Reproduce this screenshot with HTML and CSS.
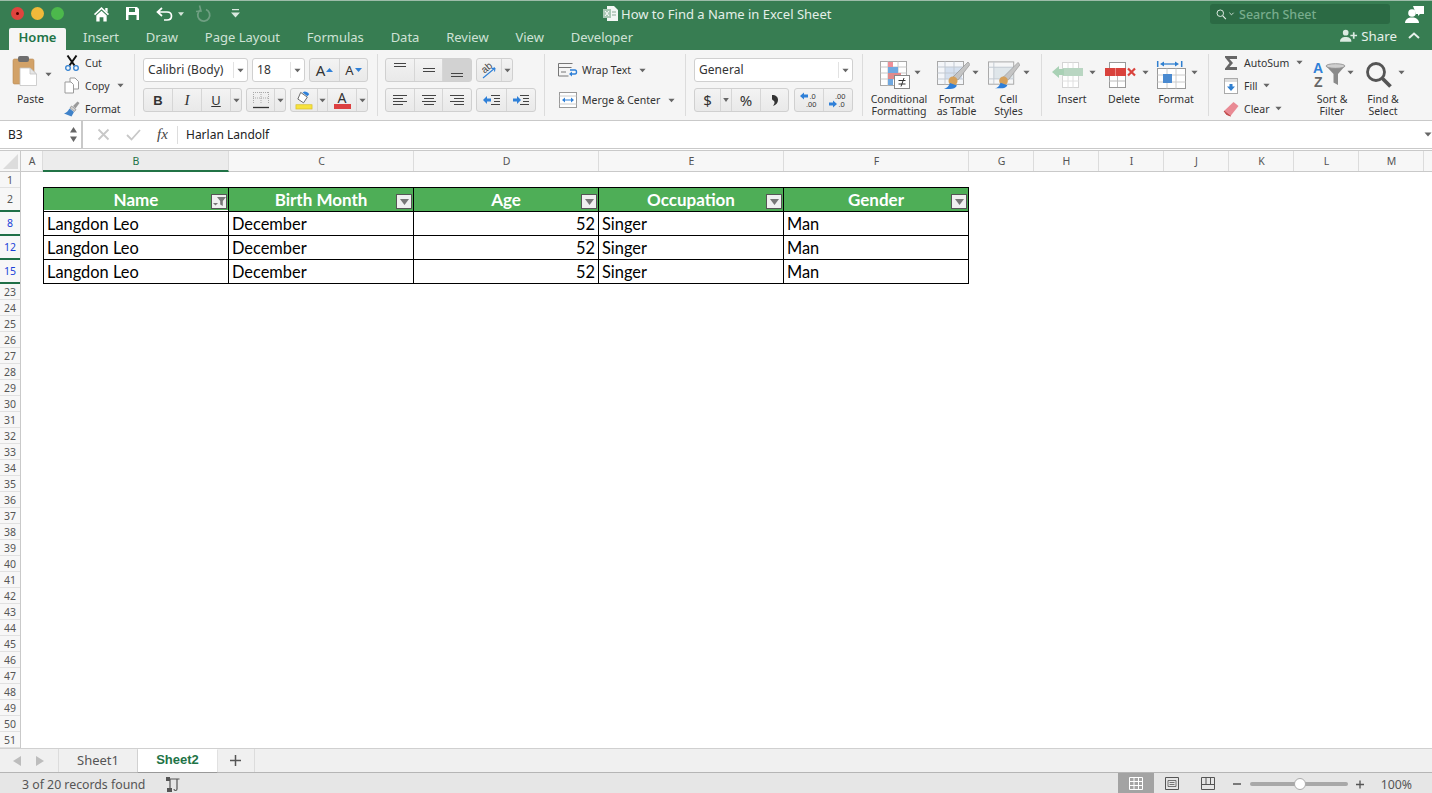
FILE: index.html
```html
<!DOCTYPE html>
<html lang="en">
<head>
<meta charset="utf-8">
<title>How to Find a Name in Excel Sheet</title>
<link rel="stylesheet" href="styles.css">
</head>
<body>
<svg class="defs" width="0" height="0" aria-hidden="true">
  <defs>
    <symbol id="caret" viewBox="0 0 8 5"><path d="M0.5 0.500h7L4 4.500z" fill="#666"/></symbol>
    <symbol id="brush" viewBox="0 0 33 28"><path d="M31 1l2 2.500L21 19l-5-3z" fill="#c4c4c4" stroke="#8a8a8a" stroke-width=".6"/><circle cx="16" cy="20" r="4.500" fill="#d5a05a"/><path d="M7 28c3-1 5-3 6-6l7 2.500c-1 2.500-4 3.500-7 3.500z" fill="#2f7fd8"/></symbol>
  </defs>
</svg>
<div class="app">
  <header class="titlebar">
    <div class="lights">
      <span class="light red"></span><span class="light yellow"></span><span class="light green"></span>
    </div>
    <div class="quick">
      <svg width="17" height="16" viewBox="0 0 18 17"><path d="M9 1L1 8.500l1.200 1.200L9 3.500l6.800 6.200L17 8.500z" fill="#fff"/><path d="M13 2h2.500v5L13 5z" fill="#fff"/><path d="M3.500 10L9 5l5.500 5v6.500H11v-4.500H7v4.500H3.500z" fill="#fff"/></svg>
      <svg class="q-save" width="15" height="15" viewBox="0 0 15 15"><path d="M1 1h11l2 2v11H1z" fill="#fff"/><rect x="4" y="2" width="6" height="4" fill="#377d52"/><rect x="3.500" y="9" width="8" height="5" fill="#377d52"/></svg>
      <svg class="q-undo" width="17" height="14" viewBox="0 0 17 14"><path d="M6 1L1.500 5 6 9M2 5h9c3 0 4.500 1.800 4.500 4s-1.500 4-4.500 4H8" fill="none" stroke="#fff" stroke-width="1.700"/></svg>
      <svg class="caret-w" width="6" height="4" viewBox="0 0 8 5"><path d="M0 0h8L4 5z" fill="#d5e5da"/></svg>
      <svg class="q-redo" width="15" height="17" viewBox="0 0 15 17"><path d="M10 4.500A6 6 0 1 1 4.500 5" fill="none" stroke="#6f9f82" stroke-width="1.800"/><path d="M3.500.5L5 6 0 6.500" fill="none" stroke="#6f9f82" stroke-width="1.600"/></svg>
      <svg class="q-more" width="9" height="9" viewBox="0 0 9 9"><path d="M1 0h7v1.300H1zM0 3.500h9L4.500 8.500z" fill="#d9e8de"/></svg>
    </div>
    <div class="doc-title">
      <svg width="15" height="15" viewBox="0 0 15 15"><path d="M4 0h7l4 4v11H4z" fill="#f4f7f5"/><rect x="0" y="3" width="8" height="9" fill="#a9c7b4"/><path d="M2 5l4 5M6 5l-4 5" stroke="#fff"/><path d="M9 6h4M9 9h4" stroke="#8aa896"/></svg>
      <span>How to Find a Name in Excel Sheet</span>
    </div>
    <div class="search">
      <svg width="12" height="13" viewBox="0 0 14 13"><circle cx="5" cy="5" r="3.800" fill="none" stroke="#e8f1eb" stroke-width="1.100"/><path d="M8 8l3.500 3.800" stroke="#e8f1eb" stroke-width="1.300"/></svg>
      <svg class="s-caret" width="5" height="4" viewBox="0 0 6 4"><path d="M0.500 0.500L3 3l2.500-2.500" fill="none" stroke="#e8f1eb"/></svg>
      <span>Search Sheet</span>
    </div>
    <svg class="person-c" width="19" height="19" viewBox="0 0 19 19"><path d="M8 1h11v8h-4l-2 2v-2h-2z" fill="#fff"/><circle cx="7" cy="8" r="3.800" fill="#fff"/><path d="M0 18c0-3.500 3-5.500 7-5.500s7 2 7 5.500z" fill="#fff"/></svg>
  </header>

  <nav class="tabs">
    <div class="tab active">Home</div>
    <div class="tab t-insert">Insert</div>
    <div class="tab t-next">Draw</div>
    <div class="tab t-next">Page Layout</div>
    <div class="tab t-next">Formulas</div>
    <div class="tab t-next">Data</div>
    <div class="tab t-next">Review</div>
    <div class="tab t-next">View</div>
    <div class="tab t-next">Developer</div>
    <div class="share">
      <svg width="18" height="13" viewBox="0 0 19 13"><circle cx="6" cy="3.500" r="3" fill="#dcebe2"/><path d="M0 13c0-3.500 2.500-5 6-5s6 1.500 6 5z" fill="#dcebe2"/><path d="M11 6.500h7M14.500 3v7" stroke="#dcebe2" stroke-width="1.800"/></svg>
      <span>Share</span>
      <svg class="chev" width="12" height="7" viewBox="0 0 12 7"><path d="M1 6l5-4.500L11 6" fill="none" stroke="#e6f0ea" stroke-width="2"/></svg>
    </div>
  </nav>

  <section class="ribbon">
    <div class="group g-clip">
      <div class="paste">
        <svg width="24" height="30" viewBox="0 0 24 30"><rect x="0" y="3" width="21" height="25" rx="1.500" fill="#d2a268" stroke="#b88a52" stroke-width=".6"/><rect x="5" y="0" width="11" height="6" rx="2" fill="#6e6e6e"/><path d="M7 12h10l6.500 6v11.500H7z" fill="#fff" stroke="#c4c4c4" stroke-width=".8"/><path d="M17 12v6h6.500z" fill="#e6e6e6" stroke="#c4c4c4" stroke-width=".8"/></svg>
        <svg class="caret" width="7" height="5"><use href="#caret"/></svg>
        <span class="lbl">Paste</span>
      </div>
      <div class="clip-list">
        <div class="clip-row">
          <svg width="16" height="16" viewBox="0 0 16 16"><path d="M3.500 0.500l7 10M12.500 0.500l-7 10" stroke="#111" stroke-width="2"/><circle cx="4" cy="13" r="2.300" fill="none" stroke="#2f7fd0" stroke-width="1.300"/><circle cx="12" cy="13" r="2.300" fill="none" stroke="#2f7fd0" stroke-width="1.300"/></svg>
          <span>Cut</span>
        </div>
        <div class="clip-row">
          <svg width="16" height="17" viewBox="0 0 16 17"><path d="M6 1h5l3.500 3.500V12H6z" fill="#fff" stroke="#9b9b9b"/><path d="M1 5h6l2.500 2.500V16H1z" fill="#fff" stroke="#9b9b9b"/></svg>
          <span>Copy</span>
          <svg class="caret" width="7" height="5"><use href="#caret"/></svg>
        </div>
        <div class="clip-row">
          <svg width="16" height="16" viewBox="0 0 16 16"><path d="M9 5l4.500-4.500L15.500 2 11.500 7.500z" fill="#9a9a9a"/><path d="M7.500 5l4.500 3.500-1.500 2L6 7z" fill="#d0d0d0" stroke="#777" stroke-width=".6"/><path d="M5.500 7.500l4.500 3.500-2.500 4.500L0 12.500c2.500-.5 4-2.500 5.500-5z" fill="#3f82c9"/></svg>
          <span>Format</span>
        </div>
      </div>
    </div>

    <div class="group g-font">
      <div class="ctl-row">
        <div class="combo c-font"><span>Calibri (Body)</span><i class="combo-arrow"><svg width="7" height="5"><use href="#caret"/></svg></i></div>
        <div class="combo c-size"><span>18</span><i class="combo-arrow"><svg width="7" height="5"><use href="#caret"/></svg></i></div>
        <div class="btns">
          <div class="btn w29 big-a">A<svg width="7" height="4" viewBox="0 0 7 4"><path d="M0 4l3.500-4L7 4z" fill="#2f80d8"/></svg></div>
          <div class="btn w28 small-a">A<svg width="7" height="4" viewBox="0 0 7 4"><path d="M0 0l3.500 4L7 0z" fill="#2f80d8"/></svg></div>
        </div>
      </div>
      <div class="ctl-row">
        <div class="btns">
          <div class="btn w28 b">B</div>
          <div class="btn w29 i">I</div>
          <div class="btn w29 u">U</div>
          <div class="btn w11"><svg width="7" height="5"><use href="#caret"/></svg></div>
        </div>
        <div class="btns">
          <div class="btn w27"><svg width="18" height="18" viewBox="0 0 18 18"><path d="M1.500 1v12M9 1v12M16.500 1v12M1 1.500h16M1 7h16" stroke="#aaa" stroke-dasharray="1 1"/><path d="M1 16.500h16" stroke="#333" stroke-width="1.300"/></svg></div>
          <div class="btn w11"><svg width="7" height="5"><use href="#caret"/></svg></div>
        </div>
        <div class="btns">
          <div class="btn w26"><svg width="18" height="20" viewBox="0 0 19 20"><path d="M6 2l7 5-4 6-6-4z" fill="#fff" stroke="#666"/><path d="M8 2l5 4 2-2c-1-2-3-3-5-3z" fill="#2f80d8"/><rect x="1" y="15" width="17" height="4.500" fill="#f7e23e" stroke="#d5bd28" stroke-width=".7"/></svg></div>
          <div class="btn w10"><svg width="7" height="5"><use href="#caret"/></svg></div>
          <div class="btn w29 color-a"><span>A</span><i></i></div>
          <div class="btn w11"><svg width="7" height="5"><use href="#caret"/></svg></div>
        </div>
      </div>
    </div>

    <div class="group g-align">
      <div class="ctl-row">
        <div class="btns">
          <div class="btn w28"><svg class="al-top" width="14" height="12" viewBox="0 0 14 12"><path d="M1 1.500h12M1 4.500h12" stroke="#444"/></svg></div>
          <div class="btn w28"><svg width="14" height="12" viewBox="0 0 14 12"><path d="M1 4.500h12M1 7.500h12" stroke="#444"/></svg></div>
          <div class="btn w29 pressed"><svg class="al-bot" width="14" height="12" viewBox="0 0 14 12"><path d="M1 7.500h12M1 10.500h12" stroke="#444"/></svg></div>
        </div>
        <div class="btns">
          <div class="btn w24"><svg width="18" height="17" viewBox="0 0 18 17"><text x="2" y="9" class="ab" transform="rotate(-40 7 7)">ab</text><path d="M3 16L15 6M15 6l-3.500.5M15 6l-.5 3.500" fill="none" stroke="#2f80d8" stroke-width="1.100"/></svg></div>
          <div class="btn w11"><svg width="7" height="5"><use href="#caret"/></svg></div>
        </div>
      </div>
      <div class="ctl-row">
        <div class="btns">
          <div class="btn w28"><svg width="16" height="12" viewBox="0 0 16 12"><path d="M1 1.500h14M1 4.500h10M1 7.500h14M1 10.500h10" stroke="#444"/></svg></div>
          <div class="btn w28"><svg width="16" height="12" viewBox="0 0 16 12"><path d="M1 1.500h14M3 4.500h10M1 7.500h14M3 10.500h10" stroke="#444"/></svg></div>
          <div class="btn w29"><svg width="16" height="12" viewBox="0 0 16 12"><path d="M1 1.500h14M5 4.500h10M1 7.500h14M5 10.500h10" stroke="#444"/></svg></div>
        </div>
        <div class="btns">
          <div class="btn w29"><svg width="18" height="12" viewBox="0 0 18 12"><path d="M8 1.500h9M11 4.500h6M11 7.500h6M8 10.500h9" stroke="#444"/><path d="M0 6l4-4v2.500h4v3H4V10z" fill="#2f80d8"/></svg></div>
          <div class="btn w29"><svg width="18" height="12" viewBox="0 0 18 12"><path d="M8 1.500h9M11 4.500h6M11 7.500h6M8 10.500h9" stroke="#444"/><path d="M9 6L5 2v2.500H1v3h4V10z" fill="#2f80d8"/></svg></div>
        </div>
      </div>
    </div>

    <div class="group g-wrap">
      <div class="wrap-row">
        <svg width="20" height="14" viewBox="0 0 20 14"><path d="M.5.500h14M.5.500v12.500h10M.5 4.500h13M3 9h5" fill="none" stroke="#777"/><path d="M12 7h5c2 0 2 4 0 4h-3" fill="none" stroke="#2f80d8" stroke-width="1.400"/><path d="M11 11l3-2.500v5z" fill="#2f80d8"/></svg>
        <span>Wrap Text</span>
        <svg class="caret" width="7" height="5"><use href="#caret"/></svg>
      </div>
      <div class="wrap-row">
        <svg class="merge-ic" width="18" height="16" viewBox="0 0 18 16"><rect x=".5" y=".5" width="17" height="15" fill="#fff" stroke="#999"/><path d="M.5 4h17M.5 12h17" stroke="#ccc"/><path d="M4 8h10" stroke="#2f80d8"/><path d="M3 8l3-2.500v5zM15 8l-3-2.500v5z" fill="#2f80d8"/></svg>
        <span>Merge &amp; Center</span>
        <svg class="caret" width="7" height="5"><use href="#caret"/></svg>
      </div>
    </div>

    <div class="group g-number">
      <div class="combo c-general"><span>General</span><i class="combo-arrow"><svg width="7" height="5"><use href="#caret"/></svg></i></div>
      <div class="ctl-row">
        <div class="btns">
          <div class="btn w25 sym">$</div>
          <div class="btn w11"><svg width="6" height="4" viewBox="0 0 7 5"><path d="M0 0h7L3.500 5z" fill="#666"/></svg></div>
          <div class="btn w29 sym">%</div>
          <div class="btn w28 sym"><svg width="8" height="13" viewBox="0 0 8 13"><path d="M1 1c4 0 6 2 6 5 0 3-2 5-5 6 1.500-2 2-4 1-5C2 6 1 6 1 5z" fill="#333"/></svg></div>
        </div>
        <div class="btns">
          <div class="btn w28"><svg width="18" height="16" viewBox="0 0 18 16"><path d="M0 4l4-3.500V2.500h4v3H4v2z" fill="#2f80d8"/><text x="9.500" y="6.500" class="dectxt">.0</text><text x="6" y="15.300" class="dectxt">.00</text></svg></div>
          <div class="btn w29"><svg width="18" height="16" viewBox="0 0 18 16"><text x="6" y="6.500" class="dectxt">.00</text><text x="9.500" y="15.300" class="dectxt">.0</text><path d="M8 12L4 8.500v2H0v3h4v2z" fill="#2f80d8"/></svg></div>
        </div>
      </div>
    </div>

    <div class="group g-styles">
      <div class="big s-cond">
        <div class="big-ic"><svg width="30" height="28" viewBox="0 0 30 28"><rect x=".5" y=".5" width="26" height="24" fill="#fff" stroke="#a8a8a8"/><path d="M8 .5v24M18 .5v24M.5 6h26M.5 12h26M.5 18h26" stroke="#c8c8c8"/><rect x="8" y="1" width="5" height="5" fill="#ef8f98"/><rect x="8" y="6" width="10" height="6" fill="#6fa8e0"/><rect x="8" y="12" width="13" height="6" fill="#e08a8c"/><rect x="8" y="18" width="5" height="6" fill="#6fa8e0"/><rect x="14.500" y="14.500" width="15" height="13" fill="#fff" stroke="#888"/><path d="M18.500 19.500h7M18.500 23h7M24 17l-3 8.500" stroke="#333"/></svg><svg class="caret" width="7" height="5"><use href="#caret"/></svg></div>
        <span class="lbl">Conditional<br>Formatting</span>
      </div>
      <div class="big s-table">
        <div class="big-ic"><svg width="33" height="28" viewBox="0 0 33 28"><rect x=".5" y=".5" width="26" height="23" fill="#f4f6f9" stroke="#a8a8a8"/><rect x="8" y="6" width="17" height="12" fill="#d5e0ef"/><path d="M8 .5v23M17 .5v23M.5 6h26M.5 12h26M.5 18h26" stroke="#c2c9d2"/><use href="#brush" width="33" height="28"/></svg><svg class="caret" width="7" height="5"><use href="#caret"/></svg></div>
        <span class="lbl">Format<br>as Table</span>
      </div>
      <div class="big s-cell">
        <div class="big-ic"><svg width="32" height="28" viewBox="0 0 33 28"><rect x=".5" y=".5" width="26" height="23" fill="#f5f6f7" stroke="#a8a8a8"/><rect x="6" y="6" width="20" height="12" fill="#dfe6ea"/><path d="M.5 6h26M.5 18h26M6 .5v23" stroke="#c2c9d2"/><use href="#brush" width="33" height="28"/></svg><svg class="caret" width="7" height="5"><use href="#caret"/></svg></div>
        <span class="lbl">Cell<br>Styles</span>
      </div>
    </div>

    <div class="group g-cells">
      <div class="big c-insert">
        <div class="big-ic"><svg width="31" height="26" viewBox="0 0 31 26"><rect x="10.500" y=".5" width="16" height="25" fill="#fff" stroke="#d4d4d4"/><path d="M16 .5v25M21 .5v25M10 19h17" stroke="#e0e0e0"/><rect x="11" y="6" width="20" height="8" fill="#b9d6c2"/><path d="M0 10l7-6v3h5v6H7v3z" fill="#a9d1b5"/></svg><svg class="caret" width="7" height="5"><use href="#caret"/></svg></div>
        <span class="lbl">Insert</span>
      </div>
      <div class="big c-delete">
        <div class="big-ic"><svg width="31" height="26" viewBox="0 0 31 26"><rect x="4.500" y=".5" width="16" height="25" fill="#fff" stroke="#999"/><path d="M4 19h16M12.500 14v11" stroke="#bbb"/><rect x="0" y="6" width="21" height="8" fill="#d9423c"/><path d="M10.500 6v8" stroke="#eb8a85"/><path d="M23 6.500l7 7M30 6.500l-7 7" stroke="#d9423c" stroke-width="2.200"/></svg><svg class="caret" width="7" height="5"><use href="#caret"/></svg></div>
        <span class="lbl">Delete</span>
      </div>
      <div class="big c-format">
        <div class="big-ic"><svg width="29" height="28" viewBox="0 0 29 28"><path d="M.7 0v6M24.700 0v6" stroke="#2f7fd0" stroke-width="1.500"/><path d="M5 3h15" stroke="#2f7fd0" stroke-width="1.300"/><path d="M3 3l4-2.500v5zM22 3l-4-2.500v5z" fill="#2f7fd0"/><rect x=".5" y="7.500" width="28" height="20" fill="#fff" stroke="#999"/><path d="M10 7.500v20M19 7.500v20M.5 14h28M.5 21h28" stroke="#ccc"/><rect x="6" y="13" width="9" height="9" fill="#4a8ad0"/></svg><svg class="caret" width="7" height="5"><use href="#caret"/></svg></div>
        <span class="lbl">Format</span>
      </div>
    </div>

    <div class="group g-edit">
      <div class="edit-list">
        <div class="clip-row">
          <svg width="14" height="16" viewBox="0 0 14 16"><path d="M1 1h12v3H5.500L9 8l-3.500 4H13v3H1v-1.500L5.500 8 1 2.500z" fill="#666"/></svg>
          <span>AutoSum</span>
          <svg class="caret" width="7" height="5"><use href="#caret"/></svg>
        </div>
        <div class="clip-row tight">
          <svg width="14" height="16" viewBox="0 0 14 16"><rect x=".5" y=".5" width="13" height="15" fill="#fff" stroke="#aaa"/><rect x="1" y="1" width="12" height="3" fill="#ddd"/><path d="M7 13L3 8.500h2.500V6h3v2.500H11z" fill="#2f7fd0"/></svg>
          <span>Fill</span>
          <svg class="caret" width="7" height="5"><use href="#caret"/></svg>
        </div>
        <div class="clip-row tight">
          <svg class="ic-clear" width="16" height="16" viewBox="0 0 16 16"><path d="M10.500 1l5 4-8 10-4-1.500L1 10z" fill="#e98a94"/><path d="M1 10l5 4 1.500 1-4-1.500z" fill="#c55" stroke="#b44" stroke-width=".8"/></svg>
          <span>Clear</span>
          <svg class="caret" width="7" height="5"><use href="#caret"/></svg>
        </div>
      </div>
      <div class="big e-sort">
        <div class="big-ic"><svg width="32" height="27" viewBox="0 0 32 27"><text x="0" y="12" class="az a1">A</text><text x="1" y="26" class="az z1">Z</text><path d="M13 5h19l-7 8v11l-4.500-2.500V13z" fill="#8b8b8b"/><ellipse cx="22.500" cy="5" rx="9.500" ry="2.300" fill="#cfcfcf" stroke="#8b8b8b" stroke-width=".8"/></svg><svg class="caret" width="7" height="5"><use href="#caret"/></svg></div>
        <span class="lbl">Sort &amp;<br>Filter</span>
      </div>
      <div class="big e-find">
        <div class="big-ic"><svg width="26" height="26" viewBox="0 0 26 26"><circle cx="10" cy="10" r="8.500" fill="none" stroke="#555" stroke-width="2.800"/><path d="M16.500 16.500l8 8" stroke="#555" stroke-width="3.800"/></svg><svg class="caret" width="7" height="5"><use href="#caret"/></svg></div>
        <span class="lbl">Find &amp;<br>Select</span>
      </div>
    </div>
  </section>

  <section class="formula">
    <div class="namebox">
      <span>B3</span>
      <svg width="7" height="15" viewBox="0 0 7 15"><path d="M0 5.500L3.500 0 7 5.500zM0 9.500L3.500 15 7 9.500z" fill="#666"/></svg>
    </div>
    <div class="f-actions">
      <svg width="13" height="13" viewBox="0 0 13 13"><path d="M1.500 1.500l10 10M11.500 1.500l-10 10" stroke="#c8c8c8" stroke-width="1.800"/></svg>
      <svg width="15" height="13" viewBox="0 0 15 13"><path d="M1 7l4.500 4.500L14 2" fill="none" stroke="#c8c8c8" stroke-width="1.800"/></svg>
      <span class="fx">fx</span>
    </div>
    <div class="f-input">Harlan Landolf</div>
    <svg class="f-expand" width="8" height="5"><use href="#caret"/></svg>
  </section>

  <div class="colheads">
    <div class="corner"><svg width="15" height="15" viewBox="0 0 16 16"><path d="M16 0v16H0z" fill="#dcdcdc"/></svg></div>
    <div class="ch w-a">A</div>
    <div class="ch w-b sel">B</div>
    <div class="ch w-b">C</div>
    <div class="ch w-b">D</div>
    <div class="ch w-b">E</div>
    <div class="ch w-b">F</div>
    <div class="ch w-g">G</div>
    <div class="ch w-g">H</div>
    <div class="ch w-g">I</div>
    <div class="ch w-g">J</div>
    <div class="ch w-g">K</div>
    <div class="ch w-g">L</div>
    <div class="ch w-g">M</div>
    <div class="ch w-last"></div>
  </div>

  <main class="sheet">
    <div class="rowheads">
      <div class="rh">1</div>
      <div class="rh tall">2</div>
      <div class="rh tall fl">8</div>
      <div class="rh tall fl">12</div>
      <div class="rh tall fl">15</div>
      <div class="rh">23</div><div class="rh">24</div><div class="rh">25</div><div class="rh">26</div><div class="rh">27</div>
      <div class="rh">28</div><div class="rh">29</div><div class="rh">30</div><div class="rh">31</div><div class="rh">32</div>
      <div class="rh">33</div><div class="rh">34</div><div class="rh">35</div><div class="rh">36</div><div class="rh">37</div>
      <div class="rh">38</div><div class="rh">39</div><div class="rh">40</div><div class="rh">41</div><div class="rh">42</div>
      <div class="rh">43</div><div class="rh">44</div><div class="rh">45</div><div class="rh">46</div><div class="rh">47</div>
      <div class="rh">48</div><div class="rh">49</div><div class="rh">50</div><div class="rh">51</div>
    </div>
    <div class="cells">
      <table class="data">
        <thead>
          <tr>
            <th class="selhead">Name<span class="fbtn"><svg width="13" height="9" viewBox="0 0 13 9"><path d="M0 6h5L2.500 8.500z" fill="#777"/><path d="M4 0h9L9.800 4v5l-2.600-1.500V4z" fill="#777"/></svg></span></th>
            <th>Birth Month<span class="fbtn"><svg width="9" height="6" viewBox="0 0 9 6"><path d="M0 0h9L4.500 6z" fill="#777"/></svg></span></th>
            <th>Age<span class="fbtn"><svg width="9" height="6" viewBox="0 0 9 6"><path d="M0 0h9L4.500 6z" fill="#777"/></svg></span></th>
            <th>Occupation<span class="fbtn"><svg width="9" height="6" viewBox="0 0 9 6"><path d="M0 0h9L4.500 6z" fill="#777"/></svg></span></th>
            <th>Gender<span class="fbtn"><svg width="9" height="6" viewBox="0 0 9 6"><path d="M0 0h9L4.500 6z" fill="#777"/></svg></span></th>
          </tr>
        </thead>
        <tbody>
          <tr><td>Langdon Leo</td><td>December</td><td class="num">52</td><td>Singer</td><td>Man</td></tr>
          <tr><td>Langdon Leo</td><td>December</td><td class="num">52</td><td>Singer</td><td>Man</td></tr>
          <tr><td>Langdon Leo</td><td>December</td><td class="num">52</td><td>Singer</td><td>Man</td></tr>
        </tbody>
      </table>
    </div>
  </main>

  <div class="sheettabs">
    <div class="nav-arrows">
      <svg width="8" height="10" viewBox="0 0 8 10"><path d="M8 0v10L0 5z" fill="#bdbdbd"/></svg>
      <svg width="8" height="10" viewBox="0 0 8 10"><path d="M0 0v10l8-5z" fill="#bdbdbd"/></svg>
    </div>
    <div class="stab">Sheet1</div>
    <div class="stab on">Sheet2</div>
    <div class="stab add"><svg width="11" height="11" viewBox="0 0 11 11"><path d="M0 5.500h11M5.500 0v11" stroke="#555" stroke-width="1.500"/></svg></div>
  </div>

  <footer class="status">
    <span class="st-text">3 of 20 records found</span>
    <svg class="st-macro" width="15" height="15" viewBox="0 0 15 15"><path d="M2.500 2h11M4 2v9M11 2v10c0 2-3 2-3 0" fill="none" stroke="#555" stroke-width="1.200"/><rect x="0" y="0" width="4" height="4" fill="#555"/><rect x="1" y="11" width="5" height="4" fill="#555"/></svg>
    <div class="views">
      <div class="vw on"><svg width="14" height="13" viewBox="0 0 14 13"><path d="M.5.500h13v12H.5zM.5 4.500h13M.5 8.500h13M5 .500v12M9.500.500v12" fill="none" stroke="#fff"/></svg></div>
      <div class="vw"><svg width="14" height="13" viewBox="0 0 14 13"><path d="M.5.500h13v12H.5z" fill="none" stroke="#555"/><path d="M3 3.500h8v6H3zM4.500 5.500h5M4.500 7.500h5" fill="none" stroke="#555" stroke-width=".8"/></svg></div>
      <div class="vw"><svg width="14" height="13" viewBox="0 0 14 13"><path d="M.5.500h13v12H.5zM.5 7.500h13M5 .500v7M9.500.500v7" fill="none" stroke="#555"/></svg></div>
    </div>
    <div class="zoom">
      <svg width="8" height="2" viewBox="0 0 8 2"><path d="M0 1h8" stroke="#555" stroke-width="1.500"/></svg>
      <div class="slider"><i></i></div>
      <svg width="8" height="9" viewBox="0 0 9 9"><path d="M0 4.500h9M4.500 0v9" stroke="#555" stroke-width="1.500"/></svg>
      <span>100%</span>
    </div>
  </footer>
</div>
</body>
</html>
```

FILE: styles.css
```css
* { box-sizing: border-box; }
html, body { margin: 0; padding: 0; height: 100%; overflow: hidden; background: #fff; }
body { font-family: "Noto Sans", "Open Sans", sans-serif; color: #333; }
svg { display: block; flex: none; overflow: visible; }
.defs { position: absolute; }
.app { width: 1432px; height: 793px; display: flex; flex-direction: column; }

/* title bar */
.titlebar { height: 28px; flex: none; background: #377d52; border-top: 1px solid #9dbca9; padding-bottom: 2px; display: flex; align-items: center; position: relative; color: #e8f1eb; }
.lights { display: flex; gap: 7px; margin-left: 11px; }
.light { width: 13px; height: 13px; border-radius: 50%; }
.light.red { background: #e0443e; position: relative; }
.light.red::after { content: ""; position: absolute; left: 5px; top: 5px; width: 3px; height: 3px; border-radius: 50%; background: #4d0000; }
.light.yellow { background: #f0b93a; }
.light.green { background: #4cb84c; }
.quick { display: flex; align-items: center; margin-left: 29px; }
.q-save { margin-left: 15px; }
.q-undo { margin-left: 16px; }
.caret-w { margin-left: 5px; }
.q-redo { margin-left: 12px; }
.q-more { margin-left: 20px; }
.doc-title { display: flex; align-items: center; gap: 3px; margin-left: 363px; font-size: 13px; white-space: nowrap; color: #e4efe8; }
.search { position: absolute; left: 1210px; top: 3px; width: 180px; height: 20px; background: #2b6a44; border-radius: 3px; display: flex; align-items: center; padding-left: 6px; font-size: 12.500px; font-weight: 500; color: #78ad8d; }
.s-caret { margin: 0 5px 0 1px; }
.person-c { position: absolute; left: 1405px; top: 4px; }

/* tabs */
.tabs { height: 22px; flex: none; background: #377d52; display: flex; position: relative; color: #cfe2d6; font-size: 13px; }
.tab { line-height: 19px; white-space: nowrap; }
.tab.active { width: 57px; margin-left: 9px; background: #f5f5f5; color: #217346; font-weight: 600; text-align: center; border-radius: 2px 2px 0 0; }
.t-insert { margin-left: 17px; }
.t-next { margin-left: 26.800px; }
.share { margin-left: auto; margin-right: 12px; display: flex; align-items: center; height: 15px; font-size: 13.300px; color: #e6f0ea; gap: 3px; }
.chev { margin-left: 8px; }

/* ribbon */
.ribbon { height: 71px; flex: none; background: #f5f5f5; border-bottom: 1px solid #c9c9c9; display: flex; font-size: 10.500px; color: #333; }
.group { height: 62px; margin-top: 4px; border-right: 1px solid #dcdcdc; flex: none; }
.lbl { display: block; line-height: 12px; text-align: center; white-space: nowrap; }
.caret { flex: none; }
.g-clip { width: 135px; display: flex; }
.paste { width: 60px; position: relative; padding: 2px 0 0 13px; }
.paste .caret { position: absolute; left: 45px; top: 18px; }
.paste .lbl { position: absolute; left: 17px; top: 39px; }
.clip-list { padding-left: 4px; display: flex; flex-direction: column; margin-top: -3px; }
.clip-row { height: 23px; flex: none; display: flex; align-items: center; gap: 5px; white-space: nowrap; }
.clip-row .caret { margin-left: 2px; }

.g-font { width: 243px; padding-left: 8px; }
.g-align { width: 167px; padding-left: 7px; }
.ctl-row { display: flex; gap: 4px; margin-top: 4px; height: 24px; }
.ctl-row + .ctl-row { margin-top: 6px; }
.combo { height: 24px; background: #fff; border: 1px solid #d0d0d0; border-radius: 3px; display: flex; align-items: center; padding: 0 0 2px 4px; font-size: 12px; letter-spacing: .05px; color: #333; position: relative; flex: none; }
.combo-arrow { position: absolute; right: 0; top: 3px; bottom: 3px; width: 14px; border-left: 1px solid #e2e2e2; display: flex; align-items: center; justify-content: center; }
.c-font { width: 105px; }
.c-size { width: 53px; }
.btns { display: flex; height: 24px; border: 1px solid #d0d0d0; border-radius: 3px; background: linear-gradient(#f3f3f3, #e9e9e9); flex: none; }
.btn { display: flex; align-items: center; justify-content: center; border-left: 1px solid #d6d6d6; height: 100%; font-size: 13px; color: #333; flex: none; }
.btn:first-child { border-left: 0; }
.w10 { width: 10px; }
.w11 { width: 11px; }
.w24 { width: 24px; }
.w25 { width: 25px; }
.w26 { width: 26px; }
.w27 { width: 27px; }
.w28 { width: 28px; }
.w29 { width: 29px; }
.pressed { background: #d2d2d2; }
.al-top { margin-top: -5px; }
.al-bot { margin-bottom: -4px; }
.big-a { font-size: 15px; gap: 1px; }
.small-a { font-size: 13px; gap: 1px; }
.b { font-weight: 700; font-family: "Liberation Sans", sans-serif; }
.i { font-style: italic; font-family: "Liberation Serif", serif; font-size: 15px; }
.u { text-decoration: underline; }
.color-a { flex-direction: column; line-height: 13px; font-size: 14px; }
.color-a i { width: 17px; height: 5px; background: #dc4040; display: block; }
.ab { font: 10px "Liberation Sans", sans-serif; fill: #444; }

.g-wrap { width: 141px; padding: 4px 0 0 13px; }
.wrap-row { height: 24px; display: flex; align-items: center; gap: 4px; white-space: nowrap; margin-bottom: 6px; }
.wrap-row .caret { margin-left: 4px; }
.merge-ic { margin: 0 1px; }
.g-number { width: 177px; padding-left: 8px; }
.c-general { width: 159px; margin-top: 4px; }
.g-number .ctl-row { margin-top: 6px; gap: 5px; }
.sym { font-size: 15px; }
.dectxt { font: 7.500px "Liberation Sans", sans-serif; fill: #333; }

.g-styles { width: 179px; display: flex; padding-left: 7px; }
.big { display: flex; flex-direction: column; align-items: flex-start; flex: none; }
.big .lbl { margin-top: 3px; align-self: center; }
.big-ic { display: flex; align-items: center; height: 36px; flex: none; padding-top: 5px; }
.big-ic .caret { margin-top: -4px; }
.s-cond { width: 58px; }
.s-cond .big-ic { margin-left: 10px; gap: 4px; }
.s-table { width: 57px; }
.s-table .big-ic { margin-left: 9px; gap: 2px; }
.s-cell { width: 47px; }
.s-cell .big-ic { margin-left: 3px; gap: 3px; }

.g-cells { width: 167px; display: flex; }
.c-insert { width: 60px; }
.c-insert .big-ic { margin-left: 10px; gap: 6px; }
.c-delete { width: 44px; }
.c-delete .big-ic { margin-left: 3px; gap: 6px; }
.c-format { width: 60px; }
.c-format .big-ic { margin-left: 11px; gap: 5px; }

.g-edit { flex: 1; border-right: 0; display: flex; padding-left: 15px; }
.edit-list { width: 86px; flex: none; display: flex; flex-direction: column; margin-top: -3px; }
.edit-list .clip-row { gap: 6px; }
.edit-list .clip-row .caret { margin-left: 1px; }
.edit-list .clip-row.tight .caret { margin-left: -1px; }
.ic-clear { margin: 0 -1px; }
.e-sort { width: 44px; }
.e-sort .big-ic { margin-left: 3px; gap: 2px; }
.e-find { width: 58px; }
.e-find .big-ic { margin-left: 12px; gap: 6px; }
.az { font: bold 14px "Liberation Sans", sans-serif; }
.a1 { fill: #2f80d8; }
.z1 { fill: #666; }

/* formula */
.formula { height: 28px; flex: none; background: #fff; border-bottom: 1px solid #c9c9c9; display: flex; align-items: center; position: relative; font-size: 12px; color: #222; }
.namebox { width: 83px; height: 100%; border-right: 2px solid #c9c9c9; display: flex; align-items: center; justify-content: space-between; padding: 0 4px 0 8px; }
.f-actions { width: 102px; display: flex; align-items: center; padding-left: 14px; gap: 16px; height: 100%; }
.fx { font: italic 15px "Liberation Serif", serif; color: #444; width: 21px; height: 18px; line-height: 17px; border-right: 1px solid #ddd; }
.f-input { padding-left: 1px; }
.f-expand { position: absolute; right: 0; top: 11px; }

/* col heads */
.colheads { height: 22px; flex: none; margin-top: 1px; border-top: 1px solid #c9c9c9; border-bottom: 1px solid #c9c9c9; background: #f7f7f7; display: flex; font-size: 10.500px; color: #555; }
.corner { width: 21px; border-right: 1px solid #c9c9c9; display: flex; align-items: flex-end; justify-content: flex-end; padding: 0 2px 2px 0; }
.ch { border-right: 1px solid #dcdcdc; display: flex; align-items: center; justify-content: center; flex: none; height: 100%; padding-left: 1px; }
.w-a { width: 22px; }
.w-b { width: 185px; }
.w-g { width: 65px; }
.w-last { flex: 1; border-right: 0; }
.ch.sel { width: 186px; background: #ececec; color: #217346; border-bottom: 2px solid #217346; height: 21px; }

/* sheet */
.sheet { flex: 1; min-height: 0; display: flex; background: #fff; }
.rowheads { width: 21px; flex: none; background: #f7f7f7; border-right: 1px solid #c9c9c9; font-size: 10.500px; color: #555; }
.rh { height: 16px; display: flex; align-items: center; justify-content: center; border-bottom: 1px solid #e1e1e1; }
.rh.tall { height: 24px; }
.rh.fl { color: #1a3fd8; border-bottom: 2px solid #1f6f47; }
.rh:nth-child(2) { border-bottom: 2px solid #1f6f47; }
.cells { flex: 1; padding: 15px 0 0 22px; }
.data { border-collapse: collapse; table-layout: fixed; width: 925px; font-family: Lato, "Liberation Sans", sans-serif; font-size: 16.400px; color: #000; }
.data th, .data td { width: 185px; height: 24px; padding: 0 3px; border: 1px solid #000; white-space: nowrap; overflow: hidden; }
.data th { background: #4eae57; color: #fff; text-align: center; font-weight: 700; font-size: 17px; position: relative; }
.data td.num { text-align: right; }
.selhead { box-shadow: inset 0 -1px 0 #fff; }
.fbtn { position: absolute; right: 1px; bottom: 2px; width: 16px; height: 15px; background: #f0f0f0; border: 1px solid #555; display: flex; align-items: center; justify-content: center; }

/* sheet tabs */
.sheettabs { height: 25px; flex: none; background: #f0f0f0; border-top: 1px solid #d0d0d0; border-bottom: 1px solid #b5b5b5; display: flex; font-size: 13px; color: #555; }
.nav-arrows { width: 59px; display: flex; gap: 15px; padding: 7px 0 0 13px; border-right: 1px solid #dcdcdc; }
.stab { width: 79px; text-align: center; line-height: 22px; border-right: 1px solid #dcdcdc; }
.stab.on { background: #fff; color: #217346; font-weight: 700; height: 23px; box-shadow: 0 1px 1px #999; font-family: "Liberation Sans", sans-serif; border-right: 0; }
.stab.add { width: 38px; display: flex; align-items: center; justify-content: center; }

/* status */
.status { height: 20px; flex: none; background: #e6e6e6; display: flex; align-items: center; font-size: 12.300px; color: #555; }
.st-text { margin: 2px 0 0 22px; }
.st-macro { margin: 2px 0 0 21px; }
.views { margin-left: auto; display: flex; height: 100%; }
.vw { width: 36px; display: flex; align-items: center; justify-content: center; padding-top: 1px; }
.vw.on { background: #a3a3a3; }
.zoom { display: flex; align-items: center; margin: 2px 20px 0 7px; width: 179px; flex: none; }
.slider { width: 98px; height: 4px; border-radius: 2px; background: #a8a8a8; position: relative; margin: 0 8px 0 9px; }
.slider i { position: absolute; left: 44px; top: -4px; width: 12px; height: 12px; border-radius: 50%; background: #fff; border: 1px solid #aaa; }
.zoom span { margin-left: 17px; }
```
